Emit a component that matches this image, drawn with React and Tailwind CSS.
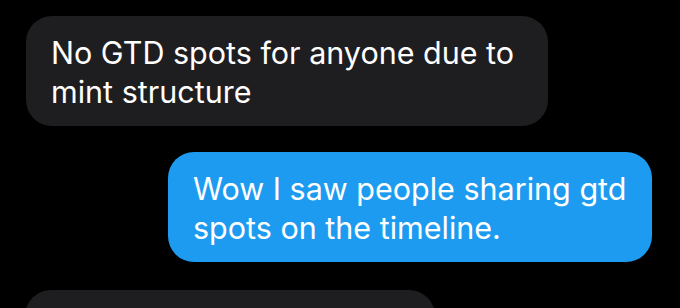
import React from 'react';

function Bubble({ mine, className, children }) {
  return (
    <div
      className={
        (mine ? 'self-end bg-[#1d9bf0] ' : 'self-start bg-[#1e1e20] ') +
        'rounded-[26px] px-[25px] pt-[17px] pb-[15px] text-white text-[30.5px] leading-[39px] ' +
        className
      }
    >
      {children}
    </div>
  );
}

export default function App() {
  return (
    <div className="w-[680px] h-[308px] overflow-hidden bg-black flex flex-col pt-[16px] pl-[26px] pr-[28px] font-['Inter','Noto_Sans',sans-serif]">
      <Bubble className="w-[522px]">No GTD spots for anyone due to mint structure</Bubble>
      <Bubble mine className="w-[484px] mt-[26px]">Wow I saw people sharing gtd spots on the timeline.</Bubble>
      <Bubble className="w-[410px] h-[80px] mt-[28px] -ml-px shrink-0" />
    </div>
  );
}
